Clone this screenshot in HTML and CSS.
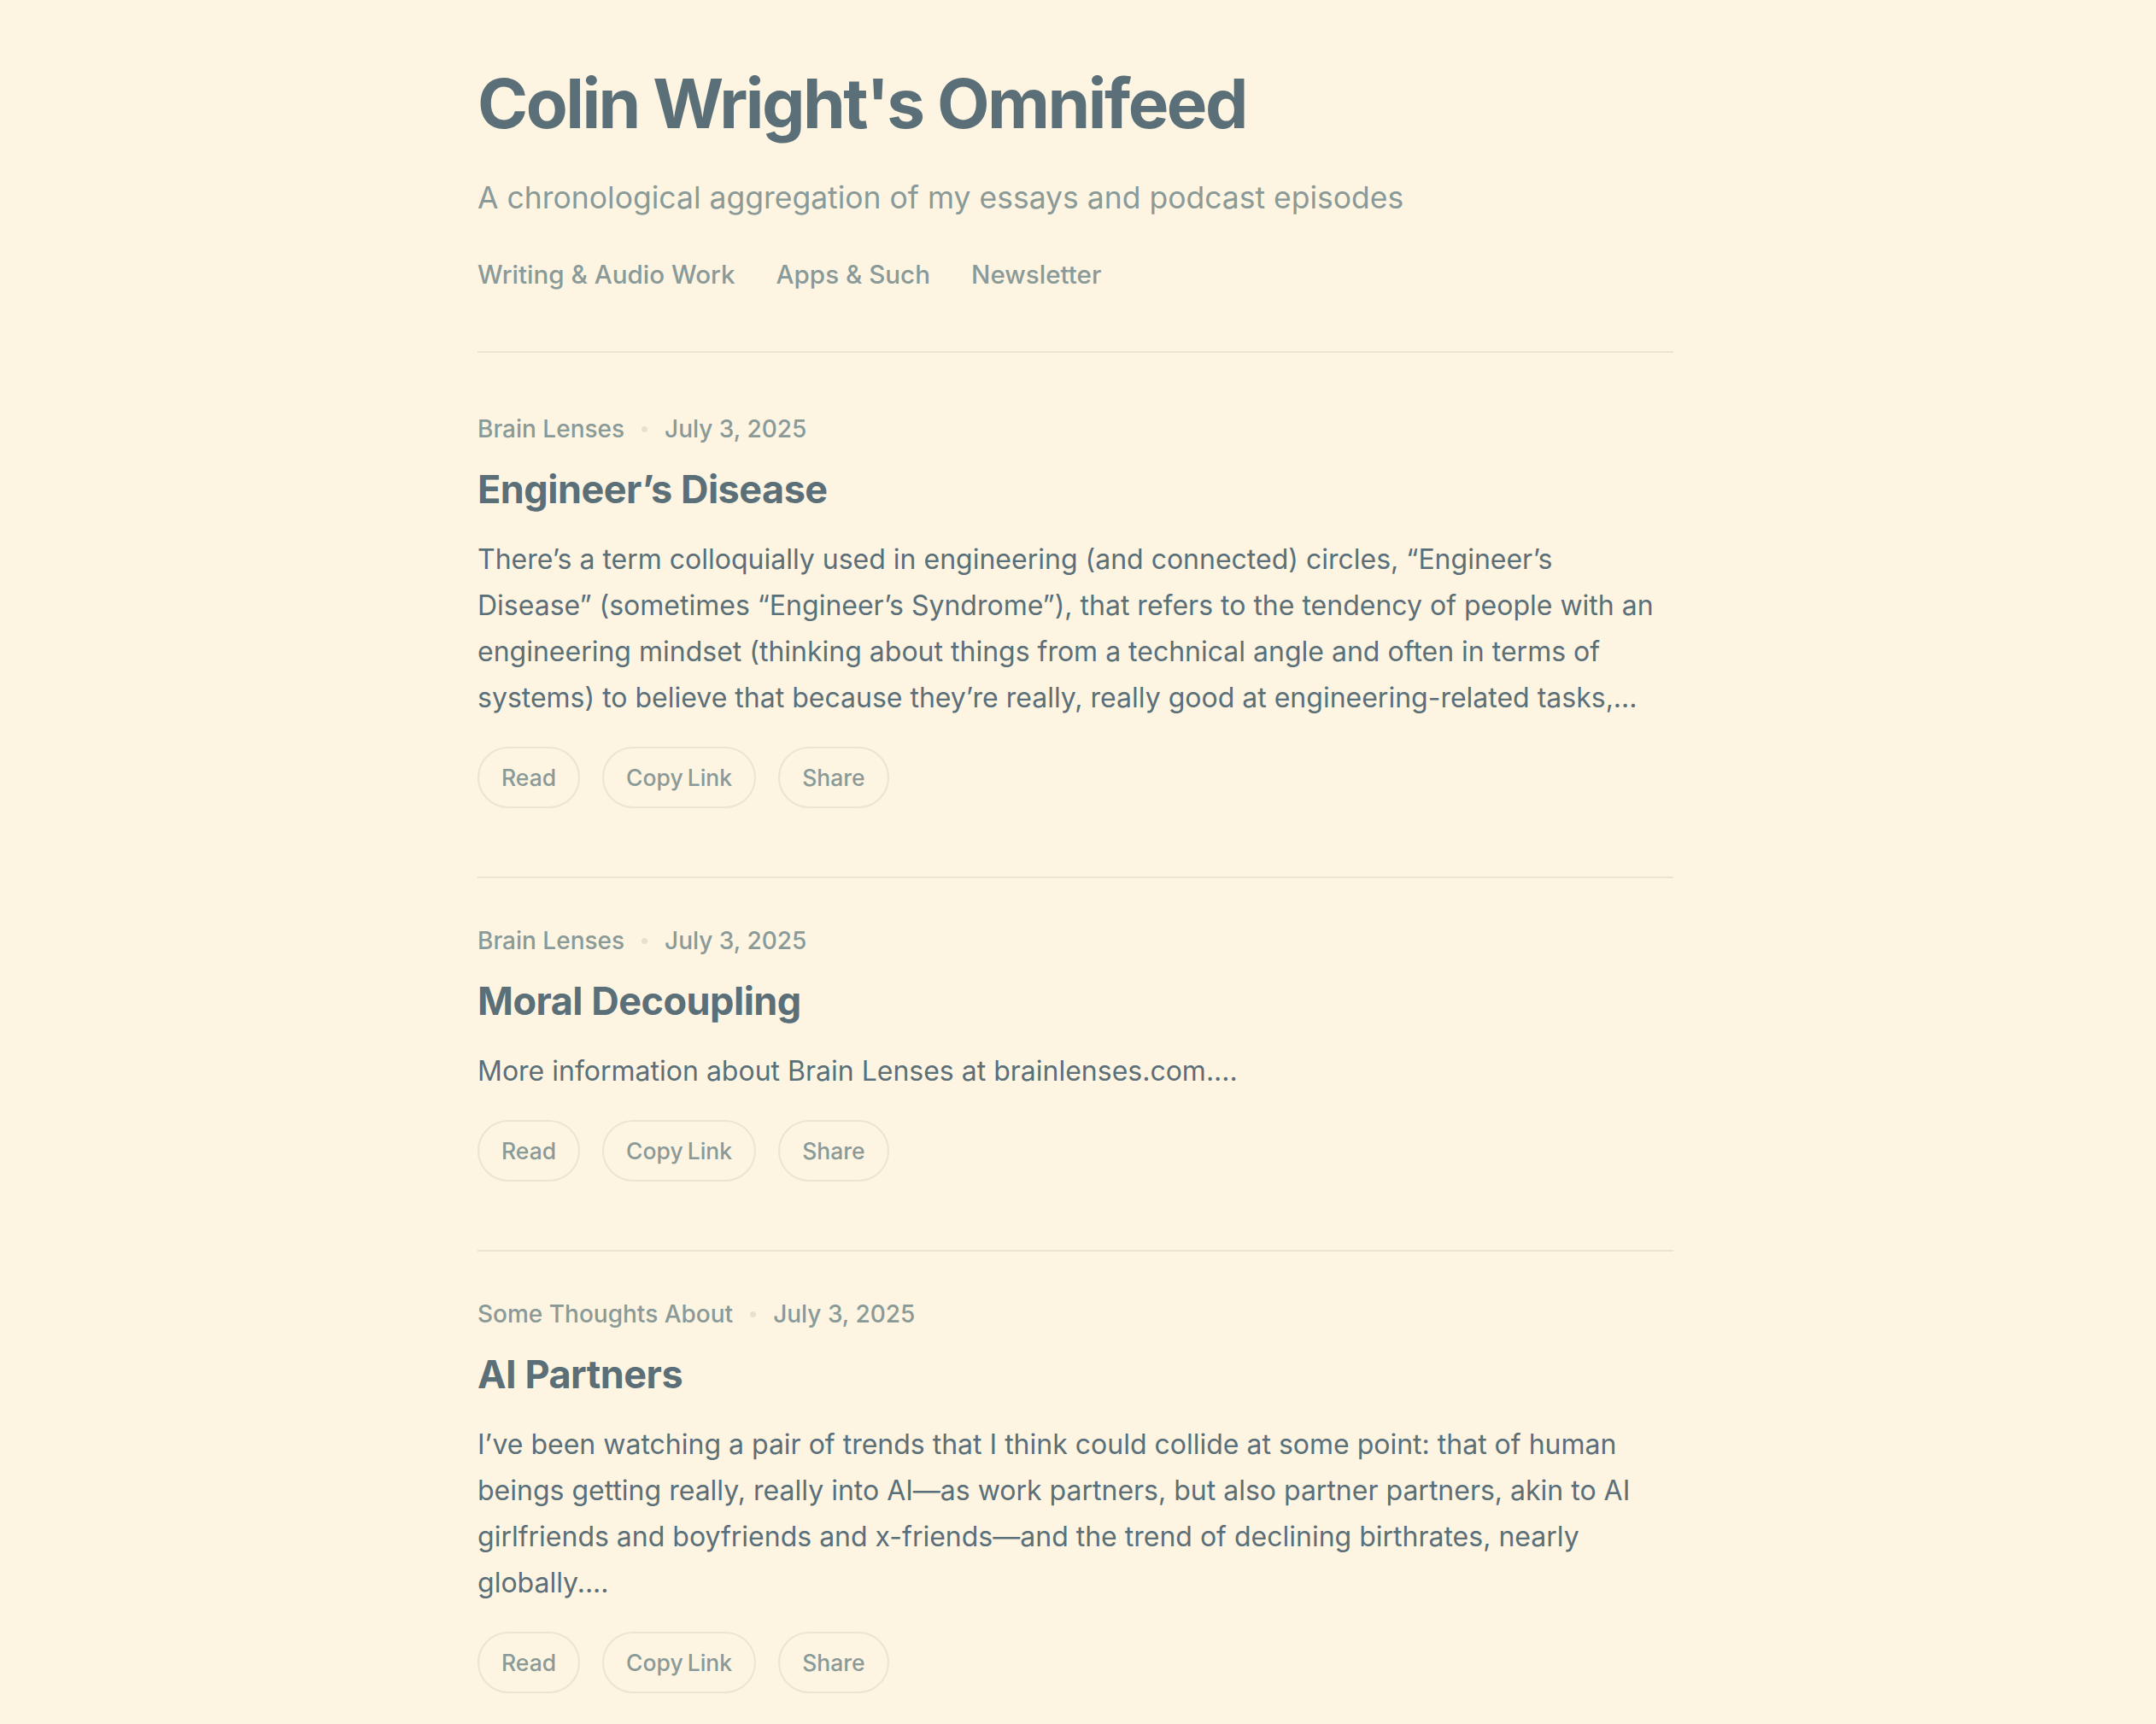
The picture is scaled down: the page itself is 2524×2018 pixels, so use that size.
FILE: index.html
```html
<!DOCTYPE html>
<html lang="en">
<head>
<meta charset="utf-8">
<title>Colin Wright's Omnifeed</title>
<link rel="stylesheet" href="styles.css">
</head>
<body>
<div class="page">
  <header class="site-header">
    <h1 class="site-title">Colin Wright's Omnifeed</h1>
    <p class="site-subtitle">A chronological aggregation of my essays and podcast episodes</p>
    <nav class="site-nav">
      <a href="#">Writing &amp; Audio Work</a>
      <a href="#">Apps &amp; Such</a>
      <a href="#">Newsletter</a>
    </nav>
  </header>
  <main class="feed">
    <article class="entry">
      <div class="meta"><span class="source">Brain Lenses</span><span class="dot"></span><span class="date">July 3, 2025</span></div>
      <h2 class="entry-title">Engineer’s Disease</h2>
      <p class="excerpt">There’s a term colloquially used in engineering (and connected) circles, “Engineer’s Disease” (sometimes “Engineer’s Syndrome”), that refers to the tendency of people with an engineering mindset (thinking about things from a technical angle and often in terms of systems) to believe that because they’re really, really good at engineering-related tasks,...</p>
      <div class="actions"><a class="btn" href="#">Read</a><a class="btn" href="#">Copy Link</a><a class="btn" href="#">Share</a></div>
    </article>
    <article class="entry">
      <div class="meta"><span class="source">Brain Lenses</span><span class="dot"></span><span class="date">July 3, 2025</span></div>
      <h2 class="entry-title">Moral Decoupling</h2>
      <p class="excerpt">More information about Brain Lenses at brainlenses.com....</p>
      <div class="actions"><a class="btn" href="#">Read</a><a class="btn" href="#">Copy Link</a><a class="btn" href="#">Share</a></div>
    </article>
    <article class="entry">
      <div class="meta"><span class="source">Some Thoughts About</span><span class="dot"></span><span class="date">July 3, 2025</span></div>
      <h2 class="entry-title">AI Partners</h2>
      <p class="excerpt">I’ve been watching a pair of trends that I think could collide at some point: that of human beings getting really, really into AI—as work partners, but also partner partners, akin to AI girlfriends and boyfriends and x-friends—and the trend of declining birthrates, nearly globally....</p>
      <div class="actions"><a class="btn" href="#">Read</a><a class="btn" href="#">Copy Link</a><a class="btn" href="#">Share</a></div>
    </article>
  </main>
</div>
</body>
</html>
```
FILE: styles.css
```css
html, body {
  margin: 0;
  padding: 0;
  background: #fdf5e1;
}
body {
  font-family: Inter, "Noto Sans", "Liberation Sans", sans-serif;
  color: #5b6f79;
  padding-right: 6px;
}
.page {
  width: 1400px;
  margin: 0 auto;
  padding-top: 73px;
}
.site-header {
  border-bottom: 2px solid #ece4d0;
  padding-bottom: 68px;
}
.site-title {
  margin: 0;
  font-size: 80px;
  line-height: 96px;
  font-weight: 700;
  letter-spacing: -2.5px;
  color: #5b6f79;
}
.site-subtitle {
  margin: 38px 0 0;
  font-size: 35.5px;
  line-height: 50px;
  font-weight: 400;
  color: #8a9a98;
}
.site-nav {
  display: flex;
  gap: 48px;
  margin-top: 42px;
}
.site-nav a {
  font-size: 29.6px;
  line-height: 44px;
  font-weight: 500;
  color: #8a9a98;
  text-decoration: none;
}
.feed {
  padding-top: 16px;
}
.entry {
  padding: 53px 0 80px;
  border-top: 2px solid #ece4d0;
}
.entry:first-child {
  border-top: none;
}
.meta {
  display: flex;
  align-items: center;
  gap: 20px;
  font-size: 28px;
  line-height: 40px;
  font-weight: 500;
  color: #8a9a98;
}
.dot {
  width: 7px;
  height: 7px;
  border-radius: 50%;
  background: #e7e0cc;
}
.entry-title {
  margin: 23px 0 0;
  font-size: 45px;
  line-height: 56px;
  font-weight: 700;
  letter-spacing: -0.5px;
  color: #5b6f79;
}
.excerpt {
  margin: 27px 0 0;
  font-size: 32px;
  line-height: 54px;
  font-weight: 400;
  color: #5b6f79;
}
.actions {
  display: flex;
  gap: 26px;
  margin-top: 30px;
}
.btn {
  display: block;
  box-sizing: border-box;
  height: 72px;
  line-height: 68px;
  padding: 0 26px;
  border: 2px solid #ece4d0;
  border-radius: 36px;
  font-size: 26.5px;
  font-weight: 500;
  word-spacing: -2px;
  color: #8a9a98;
  text-decoration: none;
}
```
